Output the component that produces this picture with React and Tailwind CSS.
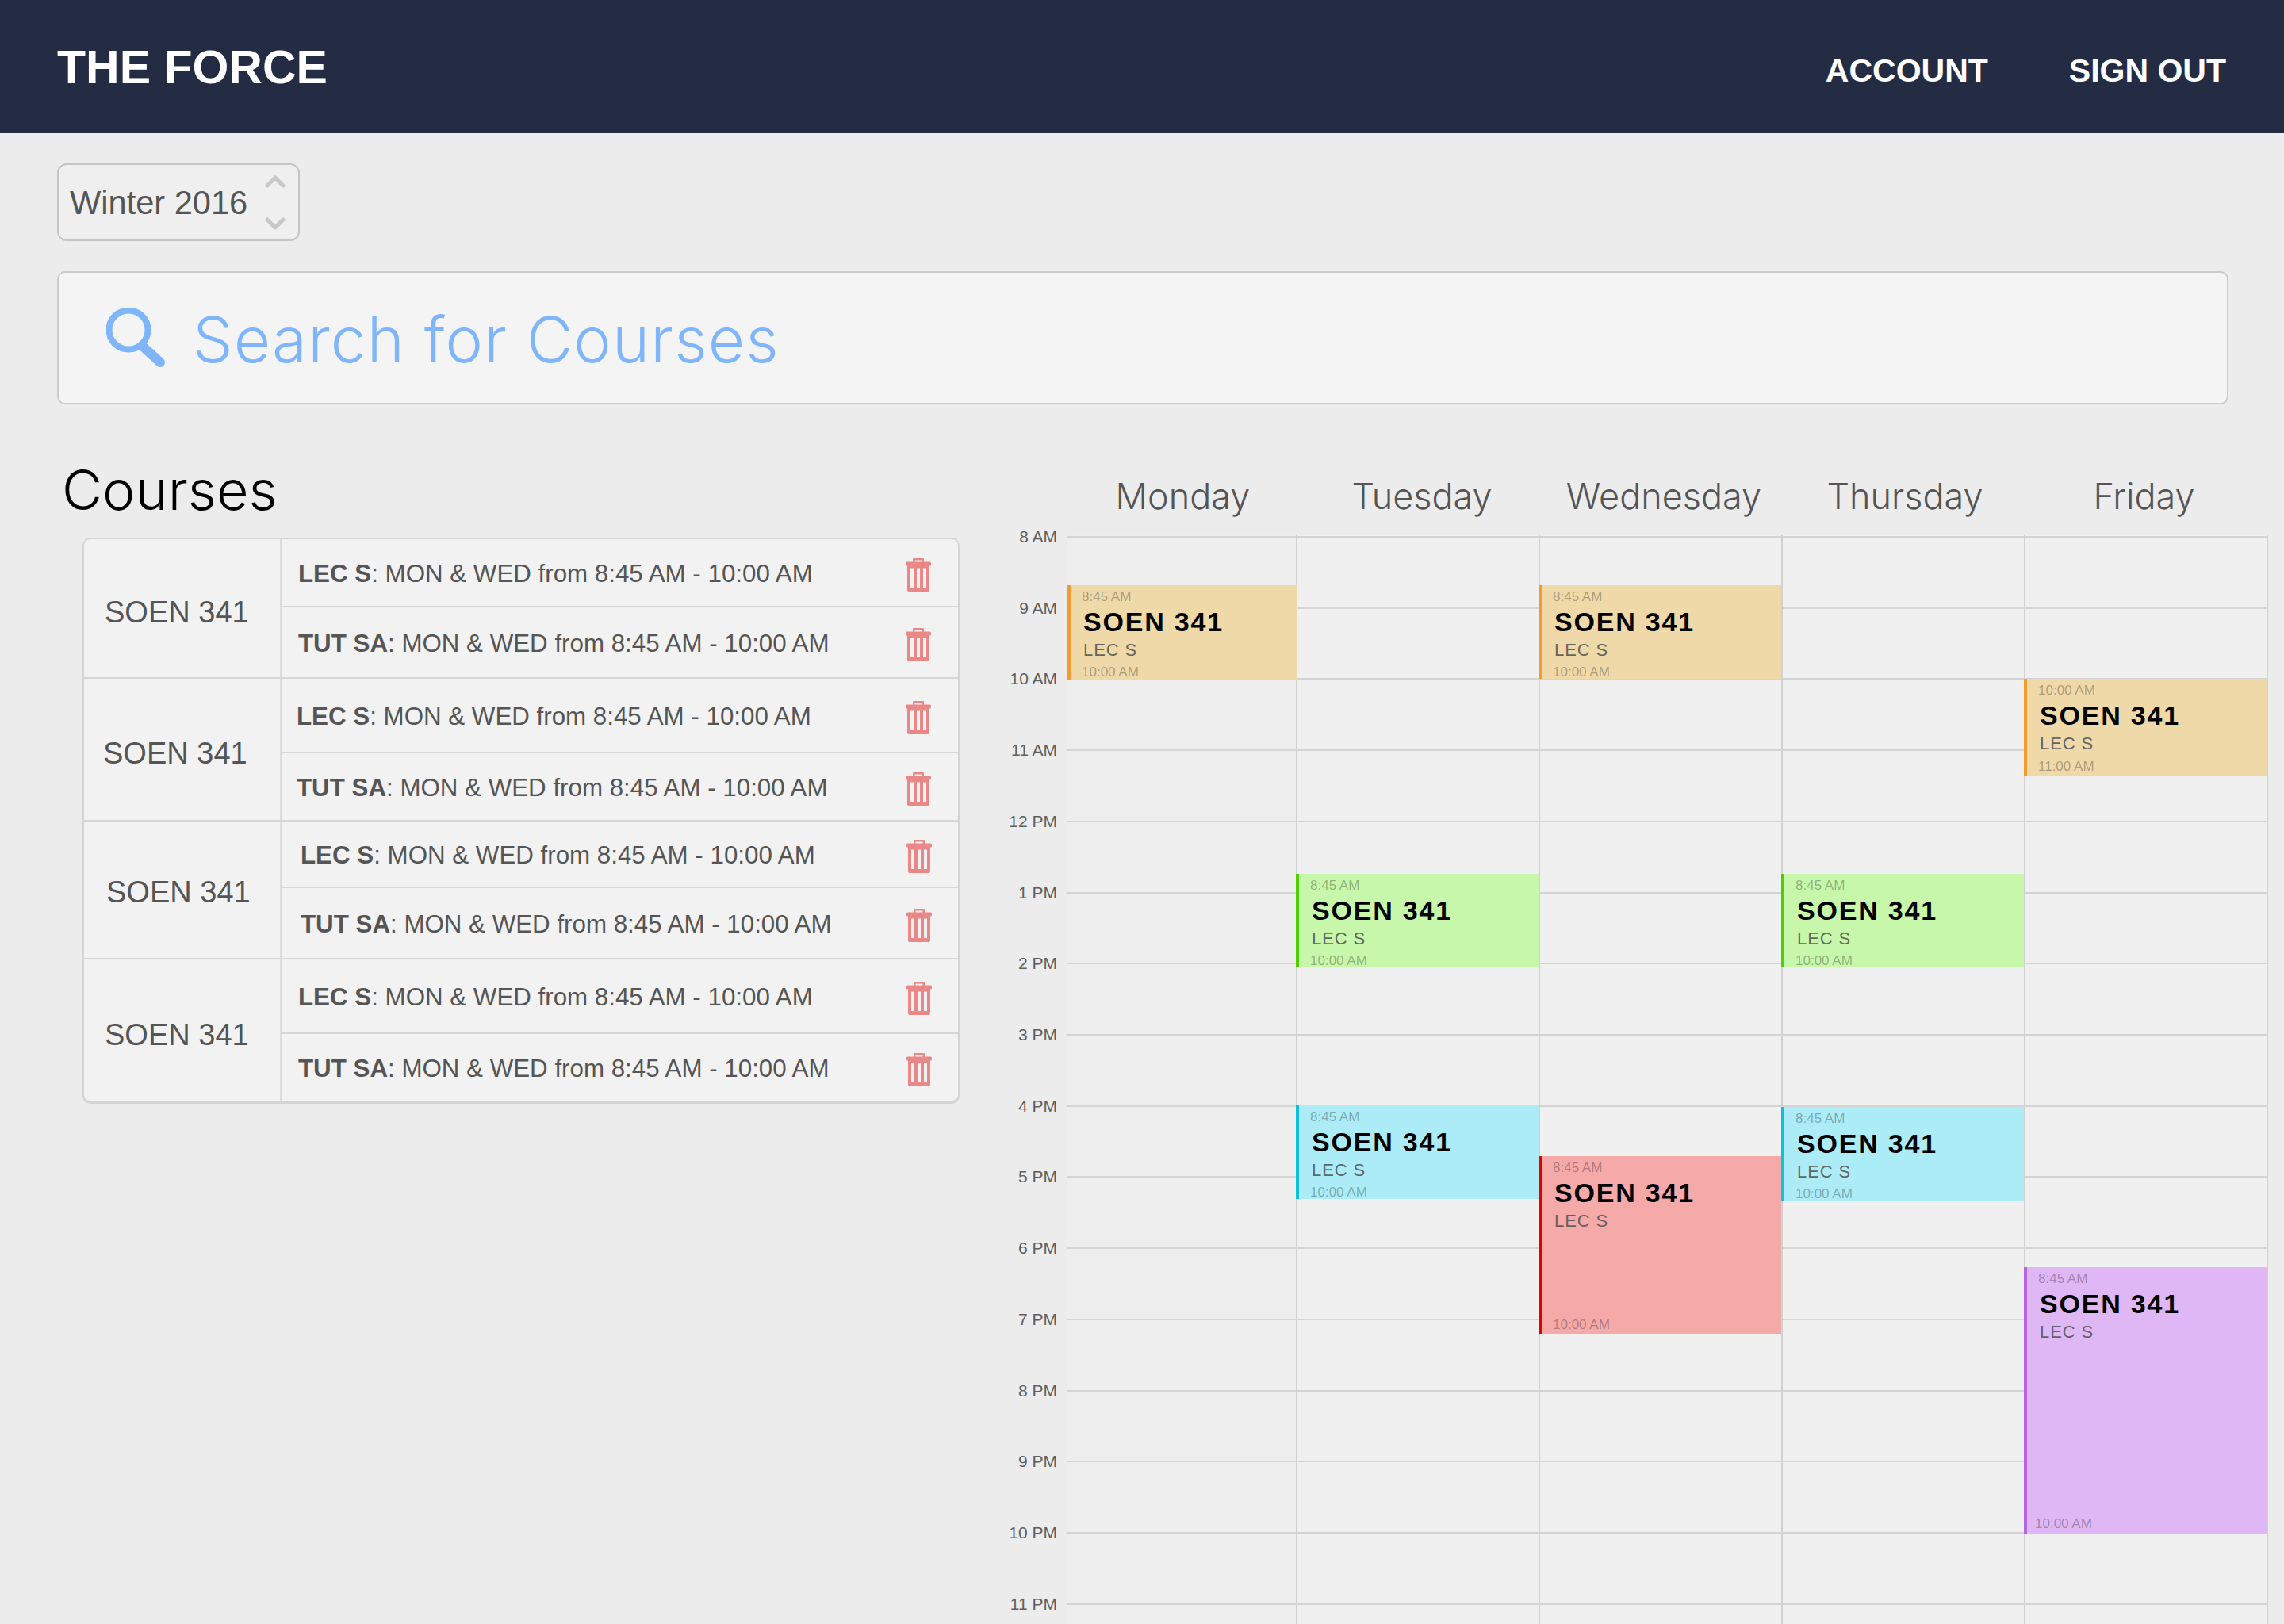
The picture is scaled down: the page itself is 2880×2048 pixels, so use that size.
const Trash = () => (
  <svg viewBox="0 0 32 42" className="block h-[42px] w-[32px] flex-none" fill="#ea8888">
    <path fillRule="evenodd" d="M9 1a1 1 0 0 1 1-1h12a1 1 0 0 1 1 1v5H9zM11.5 2.5v2.5h9V2.5z" />
    <rect x="0" y="4.5" width="32" height="5" rx="1.5" />
    <path fillRule="evenodd" d="M2 9h28v31a2 2 0 0 1-2 2H4a2 2 0 0 1-2-2zM6 12.5v24.5h4V12.5zM14 12.5v24.5h4V12.5zM22 12.5v24.5h4V12.5z" />
  </svg>
);

const SearchIcon = () => (
  <svg viewBox="0 0 74 74" className="block h-[74px] w-[74px] flex-none" fill="none" stroke="#7fb6fb">
    <circle cx="28" cy="27" r="24.5" strokeWidth="8" />
    <path d="M45 47L68 68" strokeWidth="12" strokeLinecap="round" />
  </svg>
);

const Chevron = ({ up }) => (
  <svg viewBox="0 0 26 16" className="block h-[16px] w-[26px]" fill="none" stroke="#c8c8c8" strokeWidth="5" strokeLinecap="round" strokeLinejoin="round">
    <path d={up ? "M3 13L13 3L23 13" : "M3 3L13 13L23 3"} />
  </svg>
);

const Row = ({ label, h, pad, first, trashPad }) => (
  <div className={`flex items-center justify-between ${h} ${pad} ${trashPad} ${first ? "" : "border-t-2 border-[#d6d6d6]"}`}>
    <span className="mt-[3px] text-[31.3px] leading-[38px] text-[#555555]">
      <b className="font-bold">{label}</b>: MON &amp; WED from 8:45 AM - 10:00 AM
    </span>
    <span className="mt-[5px]"><Trash /></span>
  </div>
);

const Group = ({ h1, h2, pad, namePad, first, trashPad }) => (
  <div className={`flex ${first ? "" : "border-t-2 border-[#d6d6d6]"}`}>
    <div className={`flex w-[247px] flex-none items-center text-[38px] leading-[44px] text-[#555555] ${namePad}`}>SOEN 341</div>
    <div className="flex min-w-0 flex-1 flex-col border-l-2 border-[#dcdcdc]">
      <Row label="LEC S" h={h1} pad={pad} trashPad={trashPad} first />
      <Row label="TUT SA" h={h2} pad={pad} trashPad={trashPad} />
    </div>
  </div>
);

const Event = ({ pos, tone, start, end, endClass }) => (
  <div className={`absolute z-10 flex flex-col border-l-4 pl-[14px] pt-[5px] ${pos} ${tone}`}>
    <div className="text-[17px] leading-[20px] text-black/30">{start}</div>
    <div className="ml-[2px] mt-[3px] text-[34px] font-bold leading-[36px] tracking-[1.8px] text-black">SOEN 341</div>
    <div className="ml-[2px] mt-[5px] text-[22px] leading-[26px] tracking-[0.9px] text-[#555555]/90">LEC S</div>
    <div className={`mt-auto text-[17px] leading-[20px] text-black/30 ${endClass}`}>{end}</div>
  </div>
);

const HOURS = ["8 AM","9 AM","10 AM","11 AM","12 PM","1 PM","2 PM","3 PM","4 PM","5 PM","6 PM","7 PM","8 PM","9 PM","10 PM","11 PM"];

const Cells = () => HOURS.map((h) => (
  <div key={h} className="h-[89.73px] flex-none border-t-2 border-[#d4d4d4]" />
));

const YEL = "border-[#f59a2f] bg-[#f0d9a8]";
const GRN = "border-[#4fcf00] bg-[#c7f7aa]";
const CYN = "border-[#10bfdc] bg-[#abecf7]";

export default function App() {
  return (
    <div className="h-[2048px] w-[2880px] overflow-hidden bg-[#ececec] font-['Liberation_Sans',Arial,sans-serif]">
      <header className="flex h-[168px] items-center justify-between bg-[#232c43] pl-[72px] pr-[73px] text-white">
        <div className="mt-[2px] text-[59px] font-bold leading-[68px]">THE FORCE</div>
        <nav className="mt-[10px] flex gap-[102px] text-[41px] font-bold leading-[48px]">
          <span>ACCOUNT</span>
          <span>SIGN OUT</span>
        </nav>
      </header>

      <main className="pl-[72px]">
        <div className="mt-[38px] flex h-[98px] w-[306px] items-center justify-between rounded-[12px] border-2 border-[#c4c4c4] bg-[#efefef] pl-[14px] pr-[16px]">
          <span className="mt-[1px] text-[41.6px] leading-[50px] text-[#555555]">Winter 2016</span>
          <span className="flex flex-col gap-[37px]">
            <Chevron up />
            <Chevron />
          </span>
        </div>

        <div className="mt-[38px] flex h-[168px] w-[2738px] items-center rounded-[10px] border-2 border-[#cccccc] bg-[#f4f4f4] pl-[60px]">
          <SearchIcon />
          <span className="ml-[35px] mt-[4px] font-['Inter',sans-serif] text-[80px] font-light leading-[96px] tracking-[1.2px] text-[#7fb6fb]">Search for Courses</span>
        </div>

        <div className="mt-[80px] flex">
          <section className="w-[1188px] flex-none">
            <h1 className="ml-[6px] h-[56px] font-['Inter',sans-serif] text-[70px] font-light leading-[56px] text-black">Courses</h1>
            <div className="ml-[32px] mt-[32px] w-[1106px] overflow-hidden rounded-[10px] border-x-2 border-b-4 border-t-2 border-[#d4d4d4] bg-[#f2f2f2]">
              <Group first h1="h-[84px]" h2="h-[90px]" pad="pl-[21px]" namePad="pl-[26px] pt-[9px]" trashPad="pr-[34px]" />
              <Group h1="h-[92px]" h2="h-[86px]" pad="pl-[19px]" namePad="pl-[24px] pt-[10px]" trashPad="pr-[34px]" />
              <Group h1="h-[82px]" h2="h-[90px]" pad="pl-[24px]" namePad="pl-[28px] pt-[6px]" trashPad="pr-[33px]" />
              <Group h1="h-[92px]" h2="h-[86px]" pad="pl-[21px]" namePad="pl-[26px] pt-[12px]" trashPad="pr-[33px]" />
            </div>
          </section>

          <section className="flex-none">
            <div className="ml-[86px] flex h-[85px] font-['Inter',sans-serif] text-[45px] font-light leading-[71px] text-[#555555]">
              <div className="w-[288px] pl-[3px] text-center">Monday</div>
              <div className="w-[306px] pl-[12px] text-center">Tuesday</div>
              <div className="w-[306px] pl-[10px] text-center">Wednesday</div>
              <div className="w-[306px] pl-[6px] text-center">Thursday</div>
              <div className="w-[308px] pr-[5px] text-center">Friday</div>
            </div>
            <div className="flex">
              <div className="mt-[-10px] w-[86px] flex-none pr-[13px] text-right text-[21px] leading-[24px] text-[#5f5f5f]">
                {HOURS.map((h) => (
                  <div key={h} className="h-[89.73px]">{h}</div>
                ))}
              </div>
              <div className="relative w-[288px] flex-none bg-[#eeeeee] pt-[1px]">
                <Cells />
                <Event pos="left-0 right-[-2px] top-[63px] h-[120px]" tone={YEL} start="8:45 AM" end="10:00 AM" endClass="" />
              </div>
              <div className="relative w-[306px] flex-none border-l-2 border-[#d2d2d2] bg-[#f0f0f0] pt-[1px]">
                <Cells />
                <Event pos="left-[-2px] right-0 top-[427px] h-[118px]" tone={GRN} start="8:45 AM" end="10:00 AM" endClass="mb-[-2px]" />
                <Event pos="left-[-2px] right-0 top-[719px] h-[118px]" tone={CYN} start="8:45 AM" end="10:00 AM" endClass="mb-[-2px]" />
              </div>
              <div className="relative w-[306px] flex-none border-l-2 border-[#d2d2d2] bg-[#f0f0f0] pt-[1px]">
                <Cells />
                <Event pos="left-[-2px] right-0 top-[63px] h-[118px]" tone={YEL} start="8:45 AM" end="10:00 AM" endClass="mb-[-2px]" />
                <Event pos="left-[-2px] right-0 top-[783px] h-[224px]" tone="border-[#e60000] bg-[#f6a9a9]" start="8:45 AM" end="10:00 AM" endClass="mb-[1px]" />
              </div>
              <div className="relative w-[306px] flex-none border-l-2 border-[#d2d2d2] bg-[#f0f0f0] pt-[1px]">
                <Cells />
                <Event pos="left-[-2px] right-0 top-[427px] h-[118px]" tone={GRN} start="8:45 AM" end="10:00 AM" endClass="mb-[-2px]" />
                <Event pos="left-[-2px] right-0 top-[721px] h-[118px]" tone={CYN} start="8:45 AM" end="10:00 AM" endClass="mb-[-2px]" />
              </div>
              <div className="relative w-[308px] flex-none border-x-2 border-[#d2d2d2] bg-[#f0f0f0] pt-[1px]">
                <Cells />
                <Event pos="left-[-2px] right-0 top-[181px] h-[122px]" tone={YEL} start="10:00 AM" end="11:00 AM" endClass="mb-[1px]" />
                <Event pos="left-[-2px] right-0 top-[923px] h-[336px]" tone="border-[#b566e6] bg-[#dfb7f5]" start="8:45 AM" end="10:00 AM" endClass="mb-[2px] ml-[-4px]" />
              </div>
            </div>
          </section>
        </div>
      </main>
    </div>
  );
}
